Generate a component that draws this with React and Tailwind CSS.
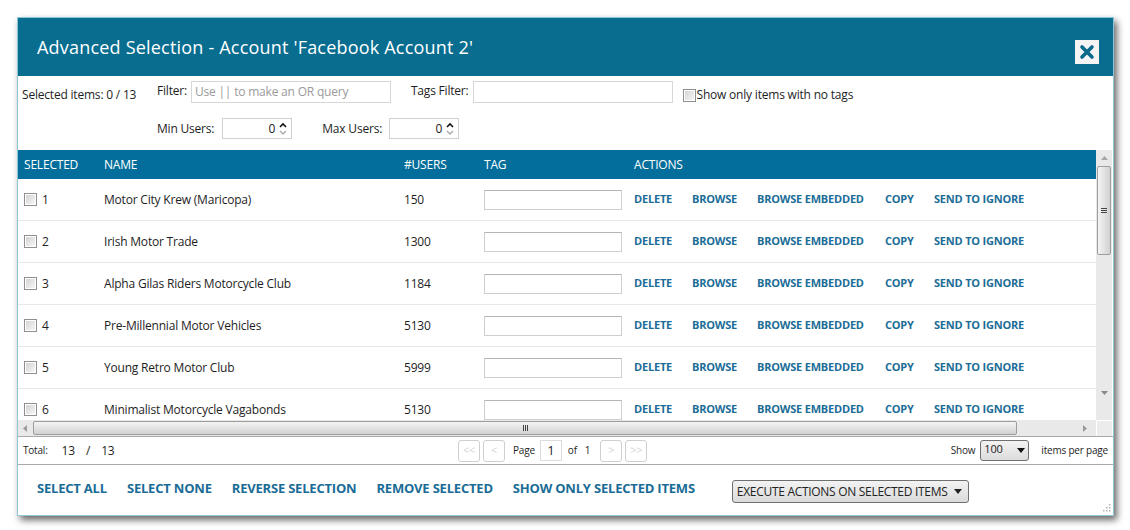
import React from 'react';

const rows = [
  { n: 1, name: 'Motor City Krew (Maricopa)', users: 150 },
  { n: 2, name: 'Irish Motor Trade', users: 1300 },
  { n: 3, name: 'Alpha Gilas Riders Motorcycle Club', users: 1184 },
  { n: 4, name: 'Pre-Millennial Motor Vehicles', users: 5130 },
  { n: 5, name: 'Young Retro Motor Club', users: 5999 },
  { n: 6, name: 'Minimalist Motorcycle Vagabonds', users: 5130 },
];

const actions = [
  { label: 'DELETE', w: 'w-[58px]' },
  { label: 'BROWSE', w: 'w-[65px]' },
  { label: 'BROWSE EMBEDDED', w: 'w-[128px]' },
  { label: 'COPY', w: 'w-[49px]' },
  { label: 'SEND TO IGNORE', w: 'w-[100px]' },
];

function Checkbox() {
  return (
    <div className="w-[13px] h-[13px] border border-[#8e8f8f] bg-white p-px shrink-0">
      <div className="w-full h-full bg-gradient-to-br from-[#d4d4d4] to-[#f6f6f6]" />
    </div>
  );
}

function Spinner() {
  return (
    <div className="w-[70px] h-[21px] border border-[#d0d0d0] flex items-center justify-end pr-[3px] gap-[3px]">
      <span className="text-[12px] text-[#222]">0</span>
      <svg width="10" height="16" viewBox="0 0 10 16">
        <path d="M2 6 L5 3 L8 6" fill="none" stroke="#111" strokeWidth="1.6" />
        <path d="M2 10 L5 13 L8 10" fill="none" stroke="#aaa" strokeWidth="1.4" />
      </svg>
    </div>
  );
}

function PagerBtn({ children }) {
  return (
    <div className="w-[22px] h-[22px] border border-[#cfcfcf] rounded-[3px] flex items-center justify-center text-[11px] text-[#d4d4d4] bg-white">
      {children}
    </div>
  );
}

export default function App() {
  return (
    <div className="w-[1130px] h-[530px] bg-white pt-[17px] pl-[17px] font-['Open_Sans',sans-serif] text-[#1e1e1e]">
      <div className="w-[1097px] h-[499px] border border-[#8fc6d8] bg-white flex flex-col shadow-[3px_4px_7px_rgba(0,0,0,0.6)]">
        {/* header */}
        <div className="h-[58px] bg-[#086d8f] flex items-start justify-between pl-[19px] pr-[14px] shrink-0">
          <div className="text-white text-[18px] tracking-[0.2px] mt-[16px]">Advanced Selection - Account 'Facebook Account 2'</div>
          <div className="mt-[22px] w-[24px] h-[24px] bg-[#f4f4f4] flex items-center justify-center">
            <svg width="16" height="16" viewBox="0 0 16 16">
              <path d="M3 3 L13 13 M13 3 L3 13" stroke="#0b6a8c" strokeWidth="3.6" strokeLinecap="round" />
            </svg>
          </div>
        </div>

        {/* filters */}
        <div className="h-[74px] shrink-0 text-[12px] tracking-[-0.2px]">
          <div className="flex items-start pt-[5px]">
            <div className="w-[139px] pl-[4px] pt-[5px]">Selected items: 0 / 13</div>
            <div className="pt-[1px]">Filter:</div>
            <div className="ml-[4px] w-[200px] h-[22px] border border-[#d6d6d6] text-[#9a9a9a] pl-[3px] flex items-center">Use || to make an OR query</div>
            <div className="ml-[20px] pt-[1px]">Tags Filter:</div>
            <div className="ml-[4px] w-[200px] h-[22px] border border-[#d6d6d6]" />
            <div className="ml-[10px] mt-[5px] flex items-center">
              <Checkbox />
              <span className="ml-px">Show only items with no tags</span>
            </div>
          </div>
          <div className="flex items-center pl-[139px] mt-[14px]">
            <span>Min Users:</span>
            <div className="ml-[8px]"><Spinner /></div>
            <span className="ml-[30px]">Max Users:</span>
            <div className="ml-[7px]"><Spinner /></div>
          </div>
        </div>

        {/* grid */}
        <div className="h-[286px] shrink-0 flex">
          <div className="w-[1078px] flex flex-col">
            <div className="h-[29px] bg-[#036e9b] flex items-center text-white text-[12px] tracking-[-0.2px] shrink-0 pl-[6px]">
              <div className="w-[80px]">SELECTED</div>
              <div className="w-[300px]">NAME</div>
              <div className="w-[80px]">#USERS</div>
              <div className="w-[150px]">TAG</div>
              <div>ACTIONS</div>
            </div>
            <div className="h-[241px] overflow-hidden">
              {rows.map((r) => (
                <div key={r.n} className="h-[42px] border-b border-[#e8e8e8] flex items-center pl-[6px] text-[12px] tracking-[-0.2px]">
                  <div className="w-[80px] flex items-center gap-[5px]">
                    <Checkbox />
                    <span>{r.n}</span>
                  </div>
                  <div className="w-[300px]">{r.name}</div>
                  <div className="w-[80px]">{r.users}</div>
                  <div className="w-[150px]">
                    <div className="w-[138px] h-[20px] border border-[#cfcfcf] border-t-[#b5b5b5]" />
                  </div>
                  <div className="flex text-[11px] font-bold text-[#1c6d97] tracking-[-0.2px]">
                    {actions.map((a) => (
                      <div key={a.label} className={a.w}>{a.label}</div>
                    ))}
                  </div>
                </div>
              ))}
            </div>
            {/* horizontal scrollbar */}
            <div className="h-[16px] bg-[#e9e9e9] flex items-center shrink-0">
              <div className="w-[15px] flex justify-center">
                <svg width="5" height="7" viewBox="0 0 5 7"><path d="M4 0 L0 3.5 L4 7Z" fill="#9a9a9a" /></svg>
              </div>
              <div className="w-[984px] h-[14px] border border-[#9d9d9d] rounded-[2px] bg-gradient-to-b from-[#f4f4f4] via-[#e3e3e3] to-[#d1d1d1] flex items-center justify-center">
                <div className="flex gap-px">
                  <div className="w-px h-[6px] bg-[#444]" />
                  <div className="w-px h-[6px] bg-[#444]" />
                  <div className="w-px h-[6px] bg-[#444]" />
                </div>
              </div>
              <div className="flex-1 flex justify-end pr-[8px]">
                <svg width="5" height="7" viewBox="0 0 5 7"><path d="M0 0 L4 3.5 L0 7Z" fill="#9a9a9a" /></svg>
              </div>
            </div>
          </div>
          {/* vertical scrollbar */}
          <div className="w-[16px] flex flex-col bg-[#e9e9e9]">
            <div className="h-[16px] flex items-center justify-center">
              <svg width="7" height="5" viewBox="0 0 7 5"><path d="M0 4 L3.5 0 L7 4Z" fill="#a6a6a6" /></svg>
            </div>
            <div className="mx-px h-[89px] border border-[#9d9d9d] rounded-[2px] bg-gradient-to-r from-[#f4f4f4] via-[#e3e3e3] to-[#d1d1d1] flex items-center justify-center">
              <div className="flex flex-col gap-px">
                <div className="w-[6px] h-px bg-[#444]" />
                <div className="w-[6px] h-px bg-[#444]" />
                <div className="w-[6px] h-px bg-[#444]" />
              </div>
            </div>
            <div className="flex-1 flex items-end justify-center pb-[24px]">
              <svg width="7" height="5" viewBox="0 0 7 5"><path d="M0 0 L3.5 4 L7 0Z" fill="#8a8a8a" /></svg>
            </div>
            <div className="h-[16px] border-t border-l border-white bg-[#ececec]" />
          </div>
        </div>

        {/* pager */}
        <div className="h-[29px] shrink-0 border-t border-b border-[#a9a9a9] flex items-center text-[10px] tracking-[-0.2px] pr-[5px]">
          <div className="w-[440px] flex items-center pl-[5px]">
            <span>Total:</span>
            <div className="ml-[14px] text-[12px] flex gap-[11px]">
              <span>13</span>
              <span>/</span>
              <span>13</span>
            </div>
          </div>
          <div className="flex items-center">
            <PagerBtn>&lt;&lt;</PagerBtn>
            <div className="ml-[3px]"><PagerBtn>&lt;</PagerBtn></div>
            <span className="ml-[8px]">Page</span>
            <div className="ml-[5px] w-[22px] h-[21px] border border-[#dcdcdc] flex items-center justify-center text-[13px]">1</div>
            <span className="ml-[6px]">of</span>
            <span className="ml-[8px]">1</span>
            <div className="ml-[10px]"><PagerBtn>&gt;</PagerBtn></div>
            <div className="ml-[3px]"><PagerBtn>&gt;&gt;</PagerBtn></div>
          </div>
          <div className="flex-1 flex items-center justify-end">
            <span>Show</span>
            <div className="ml-[5px] w-[49px] h-[21px] border border-[#707070] rounded-[3px] bg-gradient-to-b from-[#f3f3f3] to-[#dcdcdc] flex items-center justify-between px-[3px] text-[11px]">
              <span className="-mt-[3px]">100</span>
              <svg width="8" height="5" viewBox="0 0 8 5"><path d="M0 0 L4 5 L8 0Z" fill="#111" /></svg>
            </div>
            <span className="ml-[12px]">items per page</span>
          </div>
        </div>

        {/* bottom actions */}
        <div className="flex-1 flex items-start pl-[19px] pt-[14px] relative">
          <div className="flex text-[13px] font-bold text-[#1a6c96] tracking-[-0.2px] gap-[20px]">
            <span>SELECT ALL</span>
            <span>SELECT NONE</span>
            <span>REVERSE SELECTION</span>
            <span>REMOVE SELECTED</span>
            <span>SHOW ONLY SELECTED ITEMS</span>
          </div>
          <div className="ml-[37px] mt-[1px] w-[237px] h-[23px] border border-[#707070] rounded-[3px] bg-gradient-to-b from-[#f3f3f3] to-[#dadada] flex items-center justify-between pl-[4px] pr-[6px] text-[12px] text-[#222] tracking-[-0.3px]">
            <span>EXECUTE ACTIONS ON SELECTED ITEMS</span>
            <svg width="8" height="5" viewBox="0 0 8 5"><path d="M0 0 L4 5 L8 0Z" fill="#222" /></svg>
          </div>
          <svg className="absolute right-[2px] bottom-[2px]" width="10" height="10" viewBox="0 0 10 10">
            {[[8, 0], [8, 3], [5, 3], [8, 6], [5, 6], [2, 6]].map(([x, y], i) => (
              <rect key={i} x={x} y={y + 1} width="1.5" height="1.5" fill="#b0b0b0" />
            ))}
          </svg>
        </div>
      </div>
    </div>
  );
}
